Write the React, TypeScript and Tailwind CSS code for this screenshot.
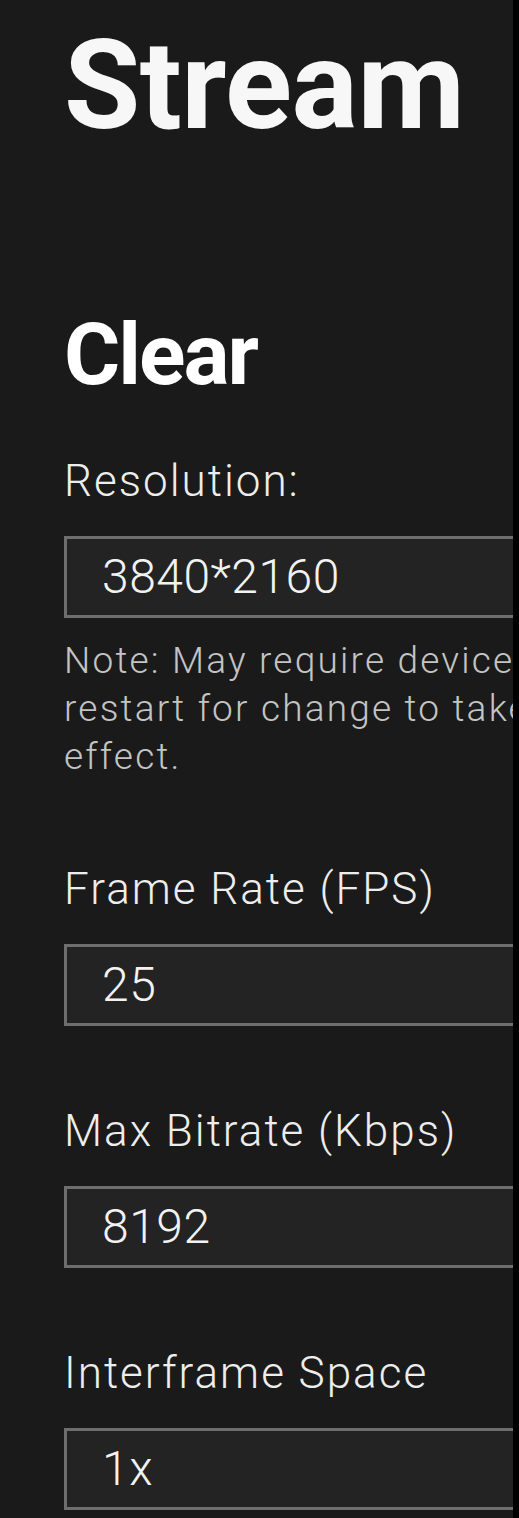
import React from 'react';

type Field = { label: string; value: string; gap: string; note?: string[] };

const fields: Field[] = [
  {
    label: 'Resolution:',
    value: '3840*2160',
    gap: 'mt-[58px]',
    note: ['Note: May require device', 'restart for change to take', 'effect.'],
  },
  { label: 'Frame Rate (FPS)', value: '25', gap: 'mt-[83px]' },
  { label: 'Max Bitrate (Kbps)', value: '8192', gap: 'mt-[80px]' },
  { label: 'Interframe Space', value: '1x', gap: 'mt-[80px]' },
];

const SettingField: React.FC<{ field: Field }> = ({ field }) => (
  <div className={field.gap}>
    <p className="text-[44px] leading-[50px] font-light tracking-[2px] text-[#ededed] whitespace-nowrap">
      {field.label}
    </p>
    <div className="mt-[30px] h-[82px] w-[520px] border-[3px] border-[#6e6e6e] bg-[#232323] flex items-center pl-[35px]">
      <span className="text-[48px] leading-none font-light tracking-[0.5px] text-[#f2f2f2]">{field.value}</span>
    </div>
    {field.note && (
      <p className="mt-[19px] text-[37px] leading-[48px] font-light tracking-[2.2px] text-[#c4c4c4] whitespace-nowrap">
        {field.note.map((line, i) => (
          <React.Fragment key={i}>
            {line}
            {i < field.note!.length - 1 && <br />}
          </React.Fragment>
        ))}
      </p>
    )}
  </div>
);

export default function App() {
  return (
    <div className="flex w-[519px] h-[1518px] bg-black" style={{ fontFamily: 'Roboto, "Noto Sans", sans-serif' }}>
      <div className="w-[513px] h-full bg-[#1a1a1a] overflow-hidden pl-[64px] pt-[24px]">
        <h1 className="text-[124px] leading-none font-bold text-[#f7f7f7] tracking-[-0.5px]">Stream</h1>
        <h2 className="mt-[164px] text-[86px] leading-none font-bold text-white tracking-[-2px]">Clear</h2>
        {fields.map((f) => (
          <SettingField key={f.label} field={f} />
        ))}
      </div>
      <div className="w-[6px] h-full bg-black" />
    </div>
  );
}
